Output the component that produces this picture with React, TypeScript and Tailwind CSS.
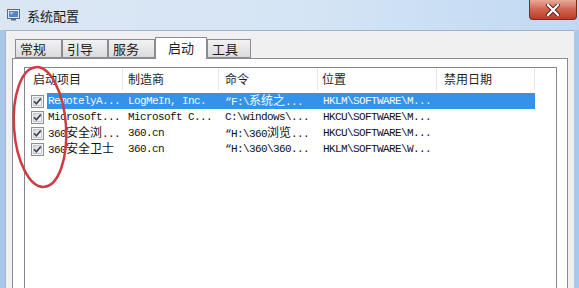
import React from "react";

const CJK = /([\u4e00-\u9fff]+)/;

function Mixed({ text }: { text: string }) {
  const parts = text.split(CJK);
  return (
    <>
      {parts.map((p, i) =>
        CJK.test(p) ? (
          <span key={i} className="font-['Noto_Sans_CJK_SC',sans-serif] text-[12px] tracking-normal">
            {p}
          </span>
        ) : (
          <span key={i}>{p}</span>
        )
      )}
    </>
  );
}

const tabs = [
  { label: "常规", w: "w-[47px]", active: false },
  { label: "引导", w: "w-[46px]", active: false },
  { label: "服务", w: "w-[47px]", active: false },
  { label: "启动", w: "w-[52px]", active: true },
  { label: "工具", w: "w-[44px]", active: false },
];

const headers = [
  { label: "启动项目", cls: "w-[98px] pl-[8px]" },
  { label: "制造商", cls: "w-[96px] pl-[5px]" },
  { label: "命令", cls: "w-[99px] pl-[6px]" },
  { label: "位置", cls: "w-[119px] pl-[4px]" },
  { label: "禁用日期", cls: "w-[98px] pl-[7px]" },
];

const rows = [
  ["RemotelyA...", "LogMeIn, Inc.", "“F:\\系统之...", "HKLM\\SOFTWARE\\M..."],
  ["Microsoft...", "Microsoft C...", "C:\\windows\\...", "HKCU\\SOFTWARE\\M..."],
  ["360安全浏...", "360.cn", "“H:\\360浏览...", "HKCU\\SOFTWARE\\M..."],
  ["360安全卫士", "360.cn", "“H:\\360\\360...", "HKLM\\SOFTWARE\\W..."],
];

function CheckBox() {
  return (
    <svg width="13" height="13" viewBox="0 0 13 13">
      <defs>
        <linearGradient id="cb" x1="0" y1="0" x2="1" y2="1">
          <stop offset="0" stopColor="#d8dbe0" />
          <stop offset="1" stopColor="#fbfbfb" />
        </linearGradient>
      </defs>
      <rect x="0.5" y="0.5" width="12" height="12" fill="#f4f4f4" stroke="#8f8f8f" />
      <rect x="2.5" y="2.5" width="8" height="8" fill="url(#cb)" stroke="#c4c7cc" />
      <path d="M3.2 6.4 L5.4 8.8 L9.8 3.6" fill="none" stroke="#3d4658" strokeWidth="1.7" />
    </svg>
  );
}

function TitleIcon() {
  return (
    <svg width="13" height="12" viewBox="0 0 13 12">
      <rect x="0.5" y="0.5" width="12" height="9" fill="#e4e9ef" stroke="#5c6b80" />
      <rect x="2" y="2" width="9" height="6" fill="#4f86c9" />
      <path d="M3 3 L7 3 L4 6" fill="#a9cbef" />
      <rect x="4" y="10" width="5" height="1.5" fill="#5c6b80" />
    </svg>
  );
}

export default function App() {
  return (
    <div className="relative flex h-[288px] w-[579px] flex-col overflow-hidden bg-gradient-to-r from-[#a8c6e8] via-[#c9dcf1] to-[#a9c9ec] font-['Noto_Sans_CJK_SC',sans-serif] text-[#1e1e1e]">
      {/* title bar */}
      <div className="flex h-[30px] items-start bg-gradient-to-r from-[#dbe6f3] via-[#d6e5f5] to-[#c0d9f2]">
        <div className="flex h-[30px] items-center pl-[7px]">
          <TitleIcon />
          <span className="ml-[7px] text-[13px] leading-none text-[#1a1a1a]">系统配置</span>
        </div>
        <div className="ml-auto mr-[2px] flex h-[20px] w-[48px] items-center justify-center rounded-b-[4px] border border-t-0 border-[#7a2a22] bg-gradient-to-b from-[#e6aa9c] via-[#d06350] to-[#bb3a27]">
          <svg width="14" height="12" viewBox="0 0 14 12">
            <path d="M2 1 L12 11 M12 1 L2 11" stroke="#4a1a14" strokeWidth="4" strokeLinecap="round" />
            <path d="M2 1 L12 11 M12 1 L2 11" stroke="#ffffff" strokeWidth="2.4" strokeLinecap="round" />
          </svg>
        </div>
      </div>

      {/* dialog body */}
      <div className="flex flex-1 px-[5px]">
        <div className="flex flex-1 flex-col border-l border-t border-[#9fb2c8] bg-[#f0f0f0] pl-[6px] pr-[6px]">
          {/* tabs */}
          <div className="relative z-10 flex h-[27px] items-end pl-[3px]">
            {tabs.map((t) =>
              t.active ? (
                <div
                  key={t.label}
                  className={`${t.w} -mb-px flex h-[22px] items-start justify-center border border-b-0 border-[#898c95] bg-white pt-[2px] text-[13px] leading-[16px]`}
                >
                  {t.label}
                </div>
              ) : (
                <div
                  key={t.label}
                  className={`${t.w} flex h-[19px] items-center border border-[#898c95] bg-gradient-to-b from-[#f2f2f2] to-[#dbdbdb] pl-[4px] pt-[1px] text-[13px] leading-[16px]`}
                >
                  {t.label}
                </div>
              )
            )}
          </div>

          {/* tab panel */}
          <div className="flex flex-1 flex-col border border-b-0 border-[#898c95] bg-white pl-[11px] pr-[10px] pt-[8px]">
            {/* list view */}
            <div className="flex-1 border border-b-0 border-[#828790] bg-white">
              <div className="flex h-[22px] items-center">
                {headers.map((h) => (
                  <div
                    key={h.label}
                    className={`${h.cls} flex h-[22px] items-center border-r border-[#e3e5e8] text-[12px] leading-none text-[#1e1e1e]`}
                  >
                    {h.label}
                  </div>
                ))}
              </div>
              <div className="pt-[3px]">
                {rows.map((r, i) => (
                  <div key={i} className="flex h-[16px] items-center">
                    <div className="flex w-[22px] items-center pl-[6px]">
                      <CheckBox />
                    </div>
                    <div
                      className={`flex h-[16px] items-center whitespace-nowrap font-['Liberation_Mono','Noto_Sans_CJK_SC',monospace] text-[11px] leading-[16px] tracking-[-0.6px] ${
                        i === 0 ? "bg-[#3592ea] text-[#f4fbff]" : "text-[#111]"
                      }`}
                    >
                      <div className="w-[76px] overflow-hidden pl-[1px]">
                        <Mixed text={r[0]} />
                      </div>
                      <div className="w-[96px] overflow-hidden pl-[5px]">
                        <Mixed text={r[1]} />
                      </div>
                      <div className="w-[99px] overflow-hidden pl-[6px]">
                        <Mixed text={r[2]} />
                      </div>
                      <div className="w-[119px] overflow-hidden pl-[5px]">
                        <Mixed text={r[3]} />
                      </div>
                      <div className="w-[98px]" />
                    </div>
                  </div>
                ))}
              </div>
            </div>
          </div>
        </div>
      </div>

      {/* red annotation ellipse */}
      <svg className="pointer-events-none absolute left-0 top-0" width="90" height="200" viewBox="0 0 90 200">
        <ellipse
          cx="40"
          cy="127"
          rx="26"
          ry="60"
          transform="rotate(-4 40 127)"
          fill="none"
          stroke="#cf3b43"
          strokeWidth="2.5"
        />
      </svg>
    </div>
  );
}
